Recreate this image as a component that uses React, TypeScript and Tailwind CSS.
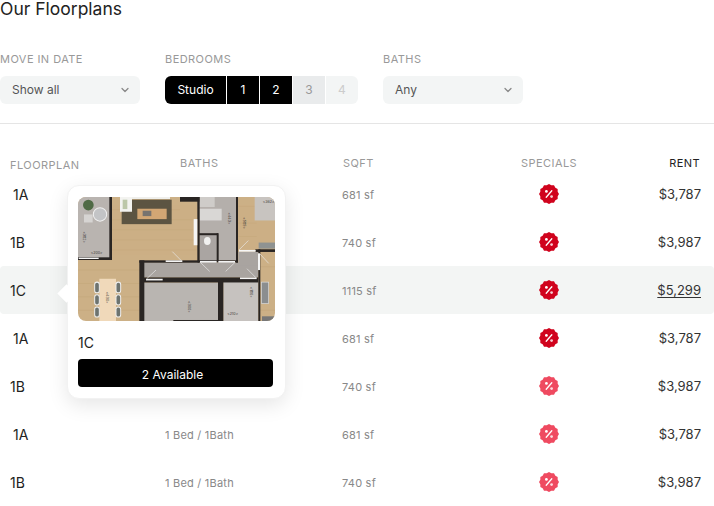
import { ChevronDown } from 'lucide-react'

// the first five rows have their baths cell covered by the popover
const rows = [
  { name: '1A', pad: 'pl-[13px]', baths: '', sqft: '681 sf', rent: '$3,787', light: false },
  { name: '1B', pad: 'pl-[10px]', baths: '', sqft: '740 sf', rent: '$3,987', light: false },
  { name: '1C', pad: 'pl-[10px]', baths: '', sqft: '1115 sf', rent: '$5,299', light: false, active: true },
  { name: '1A', pad: 'pl-[13px]', baths: '', sqft: '681 sf', rent: '$3,787', light: false },
  { name: '1B', pad: 'pl-[10px]', baths: '', sqft: '740 sf', rent: '$3,987', light: true },
  { name: '1A', pad: 'pl-[13px]', baths: '1 Bed / 1Bath', sqft: '681 sf', rent: '$3,787', light: true },
  { name: '1B', pad: 'pl-[10px]', baths: '1 Bed / 1Bath', sqft: '740 sf', rent: '$3,987', light: true },
]

const scallop = () => {
  const pts: string[] = []
  const n = 24
  for (let i = 0; i < n; i++) {
    const r = i % 2 === 0 ? 10 : 9
    const a = (i / n) * Math.PI * 2
    pts.push(`${(10 + r * Math.cos(a)).toFixed(2)},${(10 + r * Math.sin(a)).toFixed(2)}`)
  }
  return pts.join(' ')
}

const Badge = ({ light }: { light: boolean }) => (
  <svg viewBox="0 0 20 20" className="h-5 w-5">
    <polygon points={scallop()} fill={light ? '#ef4a60' : '#d0031d'} />
    <path d="M12.8 6.8 7.2 13.2" stroke="#fff" strokeWidth="1.3" strokeLinecap="round" />
    <circle cx="7.4" cy="7.4" r="1.4" fill="#fff" />
    <circle cx="12.6" cy="12.6" r="1.4" fill="#fff" opacity="0.8" />
  </svg>
)

const Select = ({ value }: { value: string }) => (
  <div className="flex h-7 w-[140px] items-center justify-between rounded-md bg-[#f3f5f5] pl-3 pr-[9px] text-xs text-[#555]">
    {value}
    <ChevronDown className="h-3 w-3 text-[#888]" strokeWidth={2.5} />
  </div>
)

const Dim = ({ x, y, label, vertical }: { x: number; y: number; label: string; vertical?: boolean }) => (
  <text x={x} y={y} transform={vertical ? `rotate(90 ${x} ${y})` : undefined} textAnchor="middle" dominantBaseline="middle">
    {label}
  </text>
)

const Plan = () => (
  <svg viewBox="54 52 591 370" preserveAspectRatio="none" className="block h-[124px] w-[197px] rounded-lg">
    <rect x="54" y="52" width="591" height="370" fill="#ccb086" />
    <g stroke="#c1a476" strokeWidth="2" opacity="0.6">
      <path d="M156 90H360M156 120H410M156 150H400M156 180H410M156 210H410M54 270H240M54 310H240M54 350H240M54 390H240M600 260H645M600 390H645M535 80H590M535 130H590M535 170H590" />
    </g>
    <rect x="54" y="52" width="96" height="182" fill="#b9b4b0" />
    <circle cx="85" cy="76" r="16" fill="#4f6a45" />
    <circle cx="120" cy="104" r="20" fill="#c3c4c6" stroke="#eee" strokeWidth="3" />
    <rect x="72" y="104" width="26" height="24" fill="#d6d4d2" />
    <rect x="185" y="60" width="150" height="73" fill="#5c5442" />
    <rect x="232" y="87" width="88" height="31" fill="#d2a674" />
    <rect x="248" y="93" width="26" height="16" fill="#77736f" />
    <rect x="180" y="52" width="36" height="44" fill="#f3f3f0" />
    <rect x="188" y="60" width="14" height="28" fill="#bcc7a8" />
    <rect x="216" y="52" width="114" height="6" fill="#efefec" />
    <rect x="418" y="52" width="110" height="190" fill="#b4afab" />
    <rect x="418" y="52" width="46" height="30" fill="#cfccc9" />
    <rect x="418" y="87" width="67" height="35" fill="#d9d7d5" />
    <rect x="420" y="165" width="50" height="78" fill="#aaa5a2" />
    <ellipse cx="442" cy="183" rx="10" ry="12" fill="#f1f1f0" />
    <rect x="584" y="52" width="61" height="70" fill="#c8c4c0" />
    <rect x="243" y="247" width="352" height="45" fill="#a9a4a0" />
    <rect x="535" y="215" width="60" height="40" fill="#a9a4a0" />
    <rect x="252" y="307" width="222" height="115" fill="#b9b5b1" />
    <rect x="490" y="298" width="105" height="124" fill="#c6c2bf" />
    <rect x="118" y="296" width="50" height="126" fill="#f0d9ba" />
    <g fill="#6d736f" stroke="#eee" strokeWidth="3">
      <rect x="104" y="306" width="14" height="32" rx="7" />
      <rect x="104" y="344" width="14" height="30" rx="7" />
      <rect x="104" y="380" width="14" height="30" rx="7" />
      <rect x="168" y="306" width="14" height="32" rx="7" />
      <rect x="168" y="344" width="14" height="30" rx="7" />
      <rect x="168" y="380" width="14" height="30" rx="7" />
    </g>
    <g fill="#292523">
      <rect x="148" y="52" width="8" height="188" />
      <rect x="54" y="232" width="102" height="8" />
      <rect x="360" y="52" width="58" height="14" />
      <rect x="412" y="52" width="7" height="195" />
      <rect x="528" y="52" width="6" height="196" />
      <rect x="238" y="241" width="180" height="7" />
      <rect x="238" y="241" width="15" height="181" />
      <rect x="414" y="160" width="60" height="6" />
      <rect x="470" y="160" width="6" height="85" />
      <rect x="414" y="241" width="120" height="6" />
      <rect x="245" y="292" width="350" height="15" />
      <rect x="474" y="298" width="16" height="124" />
      <rect x="586" y="208" width="59" height="8" />
      <rect x="595" y="208" width="6" height="214" />
      <rect x="340" y="419" width="134" height="3" />
    </g>
    <g fill="#f5f5f5">
      <rect x="56" y="233" width="60" height="4" />
      <rect x="317" y="241" width="50" height="5" />
      <rect x="420" y="243" width="50" height="5" />
      <rect x="475" y="243" width="50" height="5" />
      <rect x="537" y="210" width="50" height="5" />
      <rect x="258" y="296" width="50" height="5" />
      <rect x="540" y="292" width="50" height="5" />
      <rect x="594" y="220" width="6" height="50" />
      <rect x="401" y="118" width="11" height="78" />
    </g>
    <g stroke="#e8e8e8" strokeWidth="2" fill="none">
      <path d="M337 215 365 243M421 247 449 274M525 247 497 274M537 210 565 182M561 266 589 294M260 296 288 270M600 222 626 250" />
    </g>
    <rect x="604" y="306" width="22" height="64" fill="#8b8e8f" stroke="#ddd" strokeWidth="2" />
    <rect x="596" y="188" width="49" height="18" fill="#8f9392" />
    <rect x="606" y="408" width="39" height="14" fill="#777" />
    <g fill="#3f3b38" fontSize="11" fontFamily="Inter, sans-serif">
      <Dim x={110} y={218} label="<200>" />
      <Dim x={518} y={402} label="<210>" />
      <Dim x={626} y={67} label="<362>" />
      <Dim x={72} y={172} label="<382>" vertical />
      <Dim x={508} y={116} label="<443>" vertical />
      <Dim x={553} y={130} label="<585>" vertical />
      <Dim x={141} y={352} label="<430>" vertical />
      <Dim x={388} y={380} label="<300>" vertical />
      <Dim x={574} y={336} label="<186>" vertical />
    </g>
  </svg>
)

const App = () => {
  return (
    <div className="relative h-[506px] w-[714px] overflow-hidden bg-white font-['Inter',sans-serif]">
      <h1 className="text-[17.5px] leading-[18px] text-[#222]">Our Floorplans</h1>

      <div className="mt-[34px] flex gap-[25px]">
        <div>
          <p className="mb-[10px] text-[11px] leading-[14px] tracking-[0.04em] text-[#999]">MOVE IN DATE</p>
          <Select value="Show all" />
        </div>
        <div>
          <p className="mb-[10px] text-[11px] leading-[14px] tracking-[0.04em] text-[#999]">BEDROOMS</p>
          <div className="flex h-7 w-[193px] gap-px text-xs">
            <div className="flex w-[61px] items-center justify-center rounded-l-md bg-black text-white">Studio</div>
            <div className="flex w-[32px] items-center justify-center bg-black text-white">1</div>
            <div className="flex w-[32px] items-center justify-center bg-black text-white">2</div>
            <div className="flex w-[32px] items-center justify-center bg-[#e9ebec] text-[#999]">3</div>
            <div className="flex w-[32px] items-center justify-center rounded-r-md bg-[#f3f5f5] text-[#ccc]">4</div>
          </div>
        </div>
        <div>
          <p className="mb-[10px] text-[11px] leading-[14px] tracking-[0.04em] text-[#999]">BATHS</p>
          <Select value="Any" />
        </div>
      </div>

      <div className="mt-[19px] h-px bg-[#e5e5e5]" />

      <div className="mt-[32px] grid h-[14px] grid-cols-[180px_163px_178px_1fr] text-[11px] leading-[14px] tracking-[0.04em] text-[#999]">
        <span className="relative top-[2px] pl-[10px]">FLOORPLAN</span>
        <span>BATHS</span>
        <span>SQFT</span>
        <div className="flex justify-between pr-[14px]">
          <span>SPECIALS</span>
          <span className="text-[#222]">RENT</span>
        </div>
      </div>

      <div>
        {rows.map((row, i) => (
          <div
            key={i}
            className={`grid h-12 grid-cols-[165px_177px_178px_58px_1fr] items-center rounded text-xs ${
              row.active ? 'bg-[#f3f5f4]' : ''
            }`}
          >
            <span className={`${row.pad} pt-[2px] text-sm text-[#222]`}>{row.name}</span>
            <span className="pt-[2px] text-[11px] tracking-[0.02em] text-[#888]">{row.baths}</span>
            <span className="pt-[2px] text-[11px] tracking-[0.02em] text-[#888]">{row.sqft}</span>
            <span className="flex justify-center"><Badge light={row.light} /></span>
            <span className={`pr-[13px] pt-[2px] text-right text-[13px] text-[#333] ${row.active ? 'underline underline-offset-2' : ''}`}>
              {row.rent}
            </span>
          </div>
        ))}
      </div>

      <div className="absolute left-[67px] top-[185px] h-[214px] w-[219px] rounded-xl border border-[#f2f2f2] bg-white pl-[10px] pt-[11px] shadow-[0_6px_20px_rgba(0,0,0,0.1)]">
        <div className="absolute left-[-8px] top-[101px] h-[13px] w-[13px] rotate-45 bg-white" />
        <Plan />
        <p className="mt-[13px] text-sm leading-[17px] text-[#222]">1C</p>
        <div className="mt-[8px] flex h-7 w-[195px] items-center justify-center rounded bg-black pr-[6px] pt-[3px] text-xs text-white">
          2 Available
        </div>
      </div>
    </div>
  )
}

export default App
